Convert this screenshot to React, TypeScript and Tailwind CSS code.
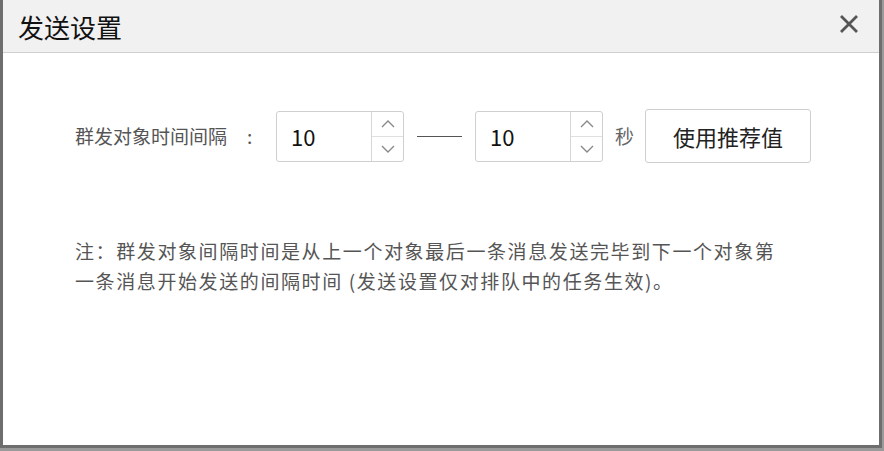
import { useState } from 'react'

const FONT = { fontFamily: '"Noto Sans CJK SC", "Noto Sans", sans-serif' }

function SpinInput({ value, onChange }: { value: number; onChange: (v: number) => void }) {
  return (
    <div className="flex h-[51px] w-[128px] rounded-[3px] border border-[#cfcfcf] bg-white">
      <div className="flex flex-1 items-center pl-[14px] text-[22px] text-[#111]">{value}</div>
      <div className="flex w-[32px] flex-col border-l border-[#d6d6d6]">
        <button
          className="flex flex-1 items-center justify-center border-b border-[#e0e0e0]"
          onClick={() => onChange(value + 1)}
        >
          <svg width="16" height="10" viewBox="0 0 16 10" fill="none" stroke="#888" strokeWidth="1.4">
            <path d="M2 8 L8 2 L14 8" />
          </svg>
        </button>
        <button
          className="flex flex-1 items-center justify-center"
          onClick={() => onChange(Math.max(0, value - 1))}
        >
          <svg width="16" height="10" viewBox="0 0 16 10" fill="none" stroke="#888" strokeWidth="1.4">
            <path d="M2 2 L8 8 L14 2" />
          </svg>
        </button>
      </div>
    </div>
  )
}

export default function App() {
  const [minGap, setMinGap] = useState(10)
  const [maxGap, setMaxGap] = useState(10)

  return (
    <div className="h-[451px] w-[884px] bg-[#9a9a9a]" style={FONT}>
      <div className="flex h-[448px] w-[882px] flex-col border-x-[3px] border-b-[3px] border-[#6e6e6e] bg-white">
        {/* Header */}
        <div className="flex h-[53px] items-center justify-between border-b border-[#cfcfcf] bg-[#f1f1f1] pl-[15px] pr-[20px]">
          <h1 className="text-[26px] text-[#111]">发送设置</h1>
          <svg width="20" height="20" viewBox="0 0 20 20" stroke="#555" strokeWidth="2.8" className="mt-[-4px]">
            <path d="M2 2 L18 18 M18 2 L2 18" />
          </svg>
        </div>

        {/* Body */}
        <div className="flex flex-1 flex-col pl-[72px] pt-[56px]">
          <div className="flex items-center">
            <span className="flex w-[201px] text-[19px] text-[#555]">
              群发对象时间间隔<span className="ml-[20px]">:</span>
            </span>
            <SpinInput value={minGap} onChange={setMinGap} />
            <div className="mx-[13px] h-px w-[45px] bg-[#555]" />
            <SpinInput value={maxGap} onChange={setMaxGap} />
            <span className="ml-[12px] mr-[11px] text-[19px] text-[#666]">秒</span>
            <button
              className="h-[54px] w-[166px] rounded-[3px] border border-[#cfcfcf] bg-white text-[22px] text-[#222]"
              onClick={() => {
                setMinGap(10)
                setMaxGap(10)
              }}
            >
              使用推荐值
            </button>
          </div>

          <p className="mt-[73px] text-[19px] leading-[30px] tracking-[1.6px] text-[#555]">
            注：群发对象间隔时间是从上一个对象最后一条消息发送完毕到下一个对象第
            <br />
            一条消息开始发送的间隔时间 (发送设置仅对排队中的任务生效)。
          </p>
        </div>
      </div>
    </div>
  )
}
